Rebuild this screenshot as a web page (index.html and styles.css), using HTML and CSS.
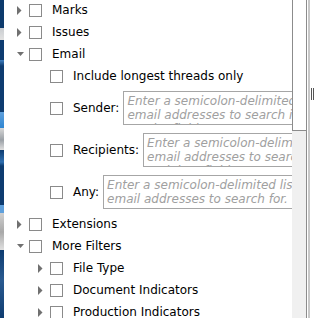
FILE: index.html
```html
<!DOCTYPE html>
<html lang="en">
<head>
    <meta charset="UTF-8">
    <title>Filters</title>
    <link rel="stylesheet" href="styles.css">
</head>
<body>
    <div class="backdrop"></div>
    <div class="panel">
        <ul class="tree">
            <li class="row lvl0"><span class="twisty"><svg width="5" height="9"><polygon points="0,0 4.5,4.5 0,9" /></svg></span><span class="check"></span><span class="label">Marks</span></li>
            <li class="row lvl0"><span class="twisty"><svg width="5" height="9"><polygon points="0,0 4.5,4.5 0,9" /></svg></span><span class="check"></span><span class="label">Issues</span></li>
            <li class="row lvl0"><span class="twisty"><svg width="7" height="5"><polygon points="0,0 7,0 3.5,4" /></svg></span><span class="check"></span><span class="label">Email</span></li>
            <li class="row lvl1"><span class="twisty"></span><span class="check"></span><span class="label">Include longest threads only</span></li>
            <li class="row field lvl1"><span class="twisty"></span><span class="check"></span><span class="label">Sender:</span><textarea rows="2" placeholder="Enter a semicolon-delimited list of email addresses to search in the sender field."></textarea></li>
            <li class="row field lvl1"><span class="twisty"></span><span class="check"></span><span class="label">Recipients:</span><textarea rows="2" placeholder="Enter a semicolon-delimited list of email addresses to search in the recipient fields."></textarea></li>
            <li class="row field lvl1"><span class="twisty"></span><span class="check"></span><span class="label">Any:</span><textarea rows="2" placeholder="Enter a semicolon-delimited list of email addresses to search for."></textarea></li>
            <li class="row lvl0"><span class="twisty"><svg width="5" height="9"><polygon points="0,0 4.5,4.5 0,9" /></svg></span><span class="check"></span><span class="label">Extensions</span></li>
            <li class="row lvl0"><span class="twisty"><svg width="7" height="5"><polygon points="0,0 7,0 3.5,4" /></svg></span><span class="check"></span><span class="label">More Filters</span></li>
            <li class="row lvl1"><span class="twisty"><svg width="5" height="9"><polygon points="0,0 4.5,4.5 0,9" /></svg></span><span class="check"></span><span class="label">File Type</span></li>
            <li class="row lvl1"><span class="twisty"><svg width="5" height="9"><polygon points="0,0 4.5,4.5 0,9" /></svg></span><span class="check"></span><span class="label">Document Indicators</span></li>
            <li class="row lvl1"><span class="twisty"><svg width="5" height="9"><polygon points="0,0 4.5,4.5 0,9" /></svg></span><span class="check"></span><span class="label">Production Indicators</span></li>
        </ul>
    </div>
    <div class="scrollbar"><div class="thumb"></div></div>
    <div class="divider"></div>
    <div class="side"><div class="grip"></div></div>
</body>
</html>
```
FILE: styles.css
```css
html, body {
    height: 100%;
}
body {
    display: flex;
    margin: 0;
    overflow: hidden;
    background: #fff;
    font-family: "DejaVu Sans", Verdana, sans-serif;
    font-size: 12px;
    color: #000;
}
.backdrop {
    width: 4px;
    flex-shrink: 0;
    background: linear-gradient(to bottom,
        #0d3a6c 0, #0d3a6c 28px,
        #c9ccd0 28px, #e2e2e2 40px,
        #0e3c70 40px, #0e3c70 60px,
        #3f7fc0 60px, #0e3c70 66px,
        #0e3c70 112px, #5fa0dc 112px, #2f86d2 128px,
        #d8d8d8 128px, #9aa0a6 140px, #e0e0e0 150px,
        #0e3c70 150px, #2f6fb0 162px, #0e3c70 166px,
        #0e3c70 205px, #5fa0dc 205px, #5fa0dc 213px,
        #d0d0d0 213px, #a8a8a8 232px, #e0e0e0 250px,
        #0e3c70 250px, #2a5a90 280px, #0e3c70 318px);
}
.panel {
    width: 288px;
    flex-shrink: 0;
    overflow: hidden;
    background: #fff;
}
.tree {
    list-style: none;
    margin: -1px 0 0;
    padding: 0;
}
.row {
    display: flex;
    align-items: center;
    height: 22px;
    white-space: nowrap;
}
.row.field {
    height: 42px;
}
.lvl0 {
    padding-left: 9px;
}
.lvl1 {
    padding-left: 30px;
}
.twisty {
    display: flex;
    align-items: center;
    width: 12px;
    height: 22px;
    padding-left: 4px;
    flex-shrink: 0;
}
.twisty svg {
    fill: #707070;
}
.check {
    width: 13px;
    height: 13px;
    box-sizing: border-box;
    border: 1px solid #8a8a8a;
    background: #fff;
    margin-right: 10px;
    flex-shrink: 0;
}
.label {
    flex-shrink: 0;
}
textarea {
    flex-shrink: 0;
    width: 228px;
    height: 34px;
    box-sizing: border-box;
    margin: 0 0 0 4px;
    padding: 2px 3px;
    border: 1px solid #a6a6a6;
    font-family: "DejaVu Sans", Verdana, sans-serif;
    font-size: 12px;
    line-height: 14px;
    resize: none;
    overflow: hidden;
    background: #fff;
}
textarea::placeholder {
    color: #a0a0a0;
    font-style: italic;
    opacity: 1;
}
.scrollbar {
    width: 14px;
    flex-shrink: 0;
    background: #f0f0f0;
}
.thumb {
    height: 131px;
    box-sizing: border-box;
    border-left: 1px solid #8c8c8c;
    border-bottom: 1px solid #8c8c8c;
    background: #fff;
}
.divider {
    width: 1px;
    flex-shrink: 0;
    background: #8c8c8c;
    border-right: 1px solid #fff;
    margin-right: 0;
    box-shadow: 2px 0 0 #c8c8c8;
}
.side {
    flex: 1;
    padding-left: 2px;
}
.grip {
    width: 3px;
    height: 12px;
    margin: 88px 0 0 1px;
    border-left: 1px solid #555;
    border-right: 1px solid #555;
    box-sizing: content-box;
    width: 1px;
}
```
